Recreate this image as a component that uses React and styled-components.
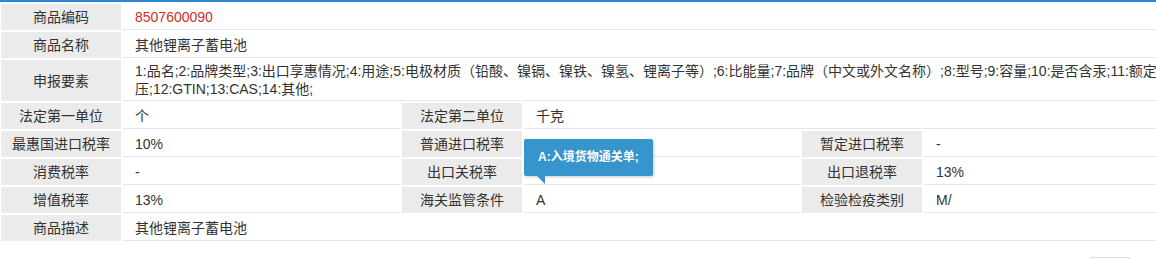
import React from 'react'
import styled, { createGlobalStyle } from 'styled-components'

const GlobalStyle = createGlobalStyle`
  html, body {
    margin: 0;
    padding: 0;
    background: #fff;
    overflow: hidden;
  }
  body {
    font-family: "Liberation Sans", "Noto Sans CJK SC", Arial, sans-serif;
    font-size: 14px;
    color: #333;
  }
`

const rows = [
  [{ label: '商品编码', value: '8507600090', span: 5, code: true }],
  [{ label: '商品名称', value: '其他锂离子蓄电池', span: 5 }],
  [
    {
      label: '申报要素',
      value:
        '1:品名;2:品牌类型;3:出口享惠情况;4:用途;5:电极材质（铅酸、镍镉、镍铁、镍氢、锂离子等）;6:比能量;7:品牌（中文或外文名称）;8:型号;9:容量;10:是否含汞;11:额定电压;12:GTIN;13:CAS;14:其他;',
      span: 5,
    },
  ],
  [
    { label: '法定第一单位', value: '个' },
    { label: '法定第二单位', value: '千克', span: 3 },
  ],
  [
    { label: '最惠国进口税率', value: '10%' },
    { label: '普通进口税率', value: '', tip: 'A:入境货物通关单;' },
    { label: '暂定进口税率', value: '-' },
  ],
  [
    { label: '消费税率', value: '-' },
    { label: '出口关税率', value: '' },
    { label: '出口退税率', value: '13%' },
  ],
  [
    { label: '增值税率', value: '13%' },
    { label: '海关监管条件', value: 'A' },
    { label: '检验检疫类别', value: 'M/' },
  ],
  [{ label: '商品描述', value: '其他锂离子蓄电池', span: 5 }],
]

function App() {
  return (
    <>
      <GlobalStyle />
      <Sheet>
        {rows.map((row, i) =>
          row.map((cell, j) => (
            <React.Fragment key={i + '-' + j}>
              <Label>{cell.label}</Label>
              <Value $span={cell.span || 1} $code={cell.code}>
                {cell.value}
                {cell.tip && (
                  <Tip>
                    {cell.tip}
                    <TipArrow />
                  </Tip>
                )}
              </Value>
            </React.Fragment>
          ))
        )}
      </Sheet>
      <Footer>
        <PageBox />
      </Footer>
    </>
  )
}

export default App

// the table is a bit wider than the window, its right edge is cut off
const Sheet = styled.div`
  width: 1172px;
  border-top: 2px solid #2f86d6;
  padding: 2px 0 0 1px;
  display: grid;
  grid-template-columns: 120px 277px 120px 276px 120px 1fr;
  gap: 2px;
`

const Label = styled.div`
  box-sizing: border-box;
  min-height: 26px;
  background: #ebebeb;
  display: flex;
  align-items: center;
  justify-content: center;
  line-height: 18px;
  color: #333;
`

const Value = styled.div`
  position: relative;
  box-sizing: border-box;
  min-height: 26px;
  grid-column: span ${(p) => p.$span};
  padding: 2px 0 2px 12px;
  border-bottom: 1px solid #e6e6e6;
  display: flex;
  align-items: center;
  line-height: 18px;
  color: ${(p) => (p.$code ? '#cf2d2d' : '#333')};
`

const Tip = styled.div`
  position: absolute;
  left: 0;
  top: 8px;
  z-index: 5;
  background: #3595cc;
  color: #fff;
  font-size: 12px;
  font-weight: bold;
  line-height: 21px;
  padding: 8px 14px;
  border-radius: 2px;
  white-space: nowrap;
  box-shadow: 1px 1px 3px rgba(0, 0, 0, 0.2);
`

const TipArrow = styled.span`
  position: absolute;
  left: 13px;
  top: 100%;
  width: 0;
  height: 0;
  border-top: 8px solid #3595cc;
  border-left: 8px solid transparent;
`

const Footer = styled.div`
  width: 1156px;
  display: flex;
  justify-content: flex-end;
  padding-right: 26px;
  box-sizing: border-box;
  margin-top: 16px;
`

const PageBox = styled.div`
  width: 37px;
  height: 2px;
  border: 1px solid #dcdcdc;
  border-bottom: none;
`
